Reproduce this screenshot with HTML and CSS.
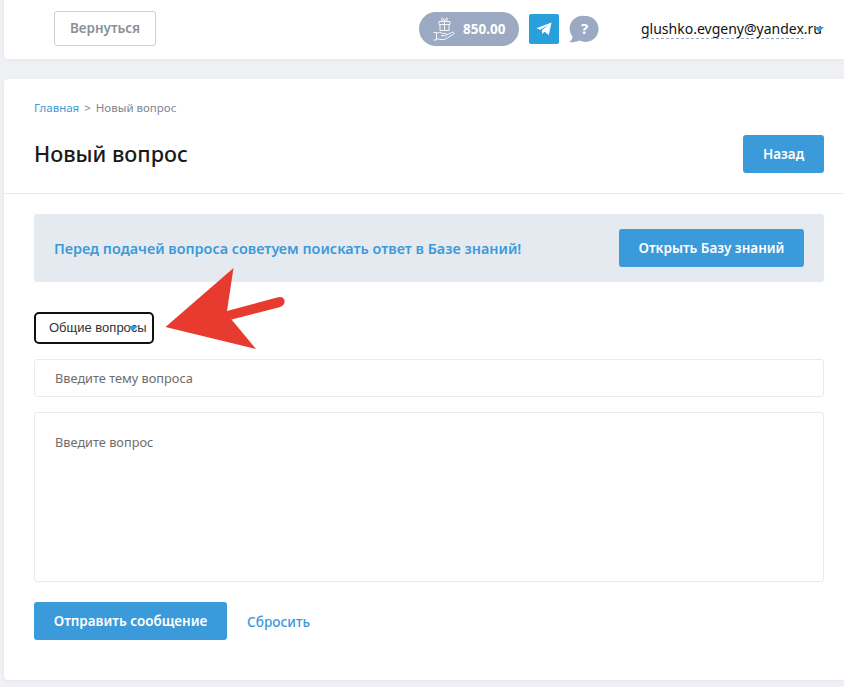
FILE: index.html
```html
<!DOCTYPE html>
<html lang="ru">
<head>
<meta charset="utf-8">
<title>Новый вопрос</title>
<link rel="stylesheet" href="styles.css">
</head>
<body>
<header class="topbar">
  <a class="back-link">Вернуться</a>
  <div class="top-actions">
    <div class="balance">
      <svg class="gift" width="23" height="24" viewBox="0 0 23 24" fill="none" stroke="#fff" stroke-width=".9">
        <path d="M6 4.500h11v3H6zM7 7.500v6h9v-6M11.500 4.500v9M11.500 4.500c-1.800-.2-3.500-1-3-2.700.6-1.500 2.500-.8 3 2.700zM11.500 4.500c1.800-.2 3.500-1 3-2.700-.6-1.500-2.500-.8-3 2.700z"/>
        <path d="M.5 15.500h3v7.500h-3M3.500 16.500c2-1.500 4-1.500 6 0h3c1.500 0 1.500 2.200 0 2.200H8M13.500 18l5-2.500c2.500-1 3.500.7 2 1.800L12.500 22c-3 1-6 .5-9-.5"/>
      </svg>
      <span class="balance-value">850.00</span>
    </div>
    <a class="tg">
      <svg width="16" height="14" viewBox="0 0 16 14"><path fill="#fff" d="M15.500.5 12.800 13 8.400 9.700 6.300 12 5.800 8.300 12.300 2.700 4.200 7.700.5 6.300z"/></svg>
    </a>
    <a class="help">
      <svg width="30" height="30" viewBox="0 0 30 30"><path fill="#9ca9c2" d="M16.500 2a13 13 0 1 1-6 24.500C8 27.800 4.500 28.500 0 28.300c1.600-1.300 3.300-3 3.600-5.300A13 13 0 0 1 16.500 2z"/></svg>
      <span class="help-mark">?</span>
    </a>
  </div>
  <div class="user">
    <span class="user-email">glushko.evgeny@yandex.ru</span>
    <span class="caret user-caret"></span>
  </div>
</header>

<main class="card">
  <div class="page-head">
    <nav class="crumbs"><a class="crumb-link">Главная</a><span class="crumb-sep">&gt;</span><span>Новый вопрос</span></nav>
    <div class="title-row">
      <h1>Новый вопрос</h1>
      <a class="btn btn-back">Назад</a>
    </div>
  </div>
  <div class="page-body">
    <section class="banner">
      <p>Перед подачей вопроса советуем поискать ответ в Базе знаний!</p>
      <a class="btn btn-kb">Открыть Базу знаний</a>
    </section>
    <div class="select">Общие вопросы<span class="caret select-caret"></span></div>
    <div class="field">Введите тему вопроса</div>
    <div class="field field-area">Введите вопрос</div>
    <div class="form-actions">
      <a class="btn btn-send">Отправить сообщение</a>
      <a class="reset">Сбросить</a>
    </div>
  </div>
</main>

<svg class="arrow" width="122" height="94" viewBox="0 0 122 94"><path fill="#e83b30" d="M69.500 1 63 44 113 30.500c3-.8 6.500-1 7.500 3 .7 3.500-2 6-5 6.800L67.500 52.500 92 82 1.500 60z"/></svg>
</body>
</html>
```
FILE: styles.css
```css
* { box-sizing: border-box; }
html, body { height: 100%; }
body {
  margin: 0;
  padding: 0 0 0 4px;
  background: #f0f1f5;
  font-family: "Noto Sans", sans-serif;
  color: #1a1a1a;
  overflow: hidden;
  position: relative;
}
.topbar {
  height: 59px;
  background: #fff;
  border-radius: 0 0 0 4px;
  box-shadow: 0 1px 4px rgba(40, 50, 80, .06);
  display: flex;
  align-items: center;
  padding-left: 50px;
}
.back-link {
  width: 102px;
  height: 35px;
  margin-top: -3px;
  border: 1px solid #c9d0da;
  border-radius: 3px;
  color: #8a9099;
  font-size: 13.5px;
  font-weight: 600;
  display: flex;
  align-items: center;
  justify-content: center;
}
.top-actions {
  margin-left: 263px;
  display: flex;
  align-items: center;
  gap: 10px;
  margin-top: -1px;
}
.balance {
  width: 100px;
  height: 34px;
  border-radius: 17px;
  background: #9ca9c2;
  color: #fff;
  display: flex;
  align-items: center;
  padding-left: 14px;
  gap: 7px;
  font-size: 13.5px;
  font-weight: 700;
}
.tg {
  width: 30px;
  height: 30px;
  background: #27a0db;
  border-radius: 2px;
  display: flex;
  align-items: center;
  justify-content: center;
}
.help {
  width: 30px;
  height: 30px;
  position: relative;
  display: block;
}
.help svg { display: block; }
.help-mark {
  position: absolute;
  left: 12px;
  top: 4px;
  color: #fff;
  font-size: 15px;
  font-weight: 700;
  line-height: 20px;
}
.user {
  margin-left: 42px;
  display: flex;
  margin-top: -2px;
  width: 182px;
  position: relative;
}
.user-email {
  display: block;
  width: 163px;
  white-space: nowrap;
  font-size: 14px;
  line-height: 19px;
  height: 20px;
  color: #111;
  border-bottom: 1px dashed #9ca9c2;
}
.caret {
  position: absolute;
  width: 0;
  height: 0;
  border-left: 5px solid transparent;
  border-right: 5px solid transparent;
  border-top: 5px solid #3b9ad9;
}
.user-caret { left: 173px; top: 8px; }

.card {
  margin-top: 20px;
  height: 601px;
  background: #fff;
  border-radius: 4px 0 0 4px;
  box-shadow: 0 1px 4px rgba(40, 50, 80, .06);
}
.page-head {
  height: 115px;
  padding: 21px 20px 0 30px;
  border-bottom: 1px solid #e8eaee;
}
.crumbs {
  font-size: 11.5px;
  line-height: 16px;
  color: #7d8694;
  display: flex;
}
.crumb-link { color: #3b9ad9; }
.crumb-sep { margin: 0 5px; }
.title-row {
  display: flex;
  justify-content: space-between;
  align-items: center;
  margin-top: 19px;
}
h1 {
  margin: 0;
  font-size: 21.6px;
  font-weight: 500;
  line-height: 28px;
  color: #1a1a1a;
}
.btn {
  display: flex;
  align-items: center;
  justify-content: center;
  height: 38px;
  background: #3b9ad9;
  color: #fff;
  border-radius: 3px;
  font-size: 13.5px;
  font-weight: 600;
}
.btn-back { width: 81px; }
.page-body { padding: 20px 20px 0 30px; }
.banner {
  height: 68px;
  background: #e5eaf1;
  border-radius: 3px;
  padding: 0 20px;
  display: flex;
  align-items: center;
  justify-content: space-between;
}
.banner p {
  margin: 0;
  color: #3b9ad9;
  font-size: 14.4px;
  font-weight: 600;
}
.btn-kb { width: 185px; }
.select {
  position: relative;
  margin-top: 30px;
  width: 120px;
  height: 32px;
  border: 2px solid #111;
  border-radius: 5px;
  padding-left: 13px;
  font-family: "Liberation Sans", sans-serif;
  font-size: 13px;
  line-height: 27px;
  color: #333;
  white-space: nowrap;
}
.select-caret { left: 92px; top: 12px; }
.field {
  margin-top: 15px;
  height: 38px;
  border: 1px solid #e8eaee;
  border-radius: 3px;
  padding-left: 20px;
  font-size: 12.75px;
  line-height: 37px;
  color: #6d6d6d;
}
.field-area {
  height: 170px;
  padding-top: 11px;
  line-height: 37px;
}
.form-actions {
  margin-top: 20px;
  display: flex;
  align-items: center;
  gap: 20px;
}
.btn-send { width: 193px; }
.reset {
  color: #3b9ad9;
  font-size: 13.6px;
  font-weight: 500;
}
.arrow {
  position: absolute;
  left: 164px;
  top: 267px;
}
```
